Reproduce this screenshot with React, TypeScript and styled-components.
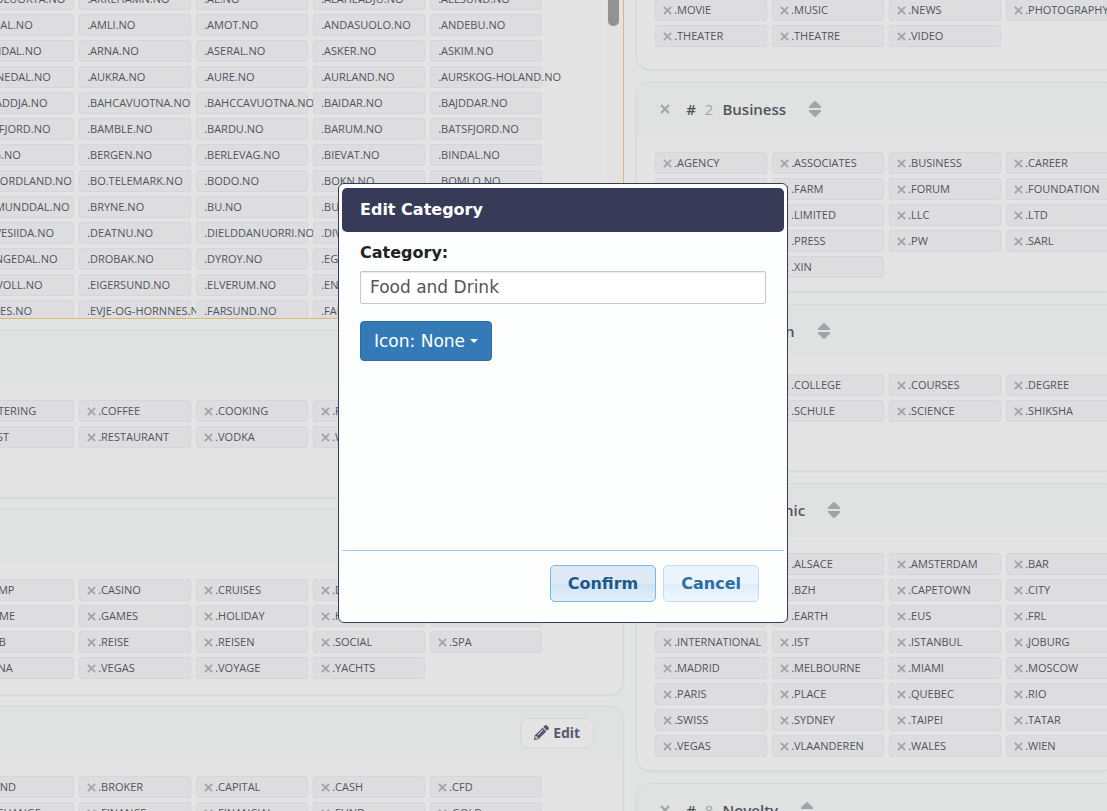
import React from "react";
import styled, { createGlobalStyle } from "styled-components";

const GlobalStyle = createGlobalStyle`
  * { box-sizing: border-box; }
  html, body { margin: 0; height: 100%; }
  #root { height: 100%; }
  body {
    background: #e2e4e3;
    color: #50555d;
    font-family: "Open Sans", "Noto Sans", sans-serif;
    font-size: 12px;
    overflow: hidden;
  }
  button, input { font: inherit; color: inherit; }
`;

const Page = styled.main`
  height: 100vh;
  overflow: hidden;
`;

const Columns = styled.div`
  display: grid;
  grid-template-columns: minmax(0, 57fr) minmax(0, 43fr);
  gap: 12px;
  margin-top: -12px;
`;

const Column = styled.div<{ $gap: number }>`
  display: flex;
  flex-direction: column;
  gap: ${(p) => p.$gap}px;
  min-width: 0;
`;

const ScrollPanel = styled.section`
  display: flex;
  height: 331px;
  overflow: hidden;
  background: #e4e4e4;
  border: solid #dcb878;
  border-width: 0 1px 1px 0;
`;

const ScrollBody = styled.div`
  flex: 1;
  min-width: 0;
  padding-right: 63px;
`;

const ScrollTrack = styled.div`
  flex: none;
  width: 18px;
  padding: 0 4px 0 3px;
  background: #e2e2e2;
`;

const ScrollThumb = styled.div`
  height: 38px;
  border-radius: 0 0 5px 5px;
  background: #929292;
`;

const ChipGrid = styled.ul<{ $align: "start" | "end" }>`
  display: grid;
  grid-template-columns: repeat(${(p) => (p.$align === "end" ? 5 : 4)}, 112px);
  justify-content: ${(p) => p.$align};
  gap: 4px 5px;
  margin: 0;
  padding: 0;
  list-style: none;
`;

const ChipItem = styled.li`
  display: flex;
  align-items: center;
  gap: 2px;
  height: 22px;
  padding: 0 7px;
  background: #dddddf;
  border: 1px solid #d6d6d8;
  border-radius: 3px;
  font-size: 11px;
  line-height: 20px;
  white-space: nowrap;
`;

const IconButton = styled.button`
  display: flex;
  flex: none;
  padding: 0;
  border: 0;
  background: none;
  color: #a0a4ac;
`;

const Card = styled.section<{ $side: "left" | "right" }>`
  min-height: ${(p) => (p.$side === "left" ? 168 : 167)}px;
  background: #e4e4e4;
  border: 1px solid #d6d8d7;
  border-radius: ${(p) => (p.$side === "left" ? "0 14px 14px 0" : "14px 0 0 14px")};
  ${(p) => (p.$side === "left" ? "border-left-width: 0;" : "border-right-width: 0;")}
  box-shadow: 0 1px 2px #d8dad9;
`;

const CardHead = styled.header<{ $side: "left" | "right" }>`
  display: flex;
  align-items: center;
  justify-content: ${(p) => (p.$side === "left" ? "flex-end" : "flex-start")};
  height: 53px;
  padding: 0 29px 2px 23px;
  background: #e0e2e1;
  border-radius: ${(p) => (p.$side === "left" ? "0 13px 0 0" : "13px 0 0 0")};
`;

const CardBody = styled.div<{ $side: "left" | "right" }>`
  padding: ${(p) => (p.$side === "left" ? "16px 81px 15px 0" : "16px 0 13px 18px")};
`;

const Title = styled.h2`
  display: flex;
  gap: 9px;
  margin: 0 23px 0 16px;
  font-size: 15px;
  font-weight: 600;
  line-height: 20px;
`;

const Order = styled.span`
  color: #a0a4ac;
  font-weight: 400;
`;

const EditButton = styled.button`
  display: flex;
  align-items: center;
  gap: 4px;
  height: 30px;
  width: 74px;
  padding: 0 13px;
  border: 1px solid #d6d8d7;
  border-radius: 9px;
  background: #e4e4e4;
  color: #565a70;
  font-family: "Noto Sans", sans-serif;
  font-size: 14px;
  font-weight: 700;
`;

const Overlay = styled.div`
  position: fixed;
  inset: 0;
  display: flex;
  align-items: center;
  justify-content: center;
  padding: 0 0 5px 19px;
`;

const Dialog = styled.form`
  display: flex;
  flex-direction: column;
  width: 450px;
  min-height: 440px;
  padding: 4px 3px;
  background: #fcfefe;
  border: 1px solid #383b58;
  border-radius: 6px;
  color: #222;
  font-family: "DejaVu Sans", sans-serif;
  font-size: 17px;
`;

const DialogTitle = styled.h1`
  margin: 0;
  padding: 0 18px;
  background: #383b58;
  border-radius: 5px;
  color: #fff;
  font-size: 16px;
  font-weight: 700;
  line-height: 44px;
`;

const DialogBody = styled.div`
  display: flex;
  flex: 1;
  flex-direction: column;
  align-items: flex-start;
  padding: 9px 18px;
`;

const FieldLabel = styled.label`
  font-size: 16px;
  font-weight: 700;
  line-height: 24px;
`;

const TextInput = styled.input`
  width: 100%;
  height: 33px;
  margin: 6px 0 17px;
  padding: 0 9px 1px;
  border: 1px solid #c6c8c8;
  border-radius: 2px;
  background: #fff;
  box-shadow: inset 0 1px 1px #ececec;
  color: #555;
`;

const IconPicker = styled.button`
  display: flex;
  align-items: center;
  gap: 5px;
  height: 40px;
  padding: 0 13px;
  border: 1px solid #2e6da4;
  border-radius: 4px;
  background: #337ab7;
  color: #fff;
`;

const Caret = styled.span`
  border: 4px solid transparent;
  border-top-color: #fff;
  border-bottom-width: 0;
`;

const DialogFoot = styled.footer`
  display: flex;
  justify-content: flex-end;
  gap: 7px;
  padding: 14px 25px 16px;
  border-top: 1px solid #a6cbe6;
`;

const DialogButton = styled.button<{ $active?: boolean }>`
  height: 37px;
  padding: 0 17px 1px;
  border: 1px solid ${(p) => (p.$active ? "#79b7e7" : "#c5dbec")};
  border-radius: 5px;
  background: ${(p) =>
    p.$active
      ? "linear-gradient(#deebf7 50%, #cfe3f4 51%, #e4f0fa)"
      : "linear-gradient(#e9f4fe 50%, #dcedfc 51%, #eff7ff)"};
  color: ${(p) => (p.$active ? "#1d5987" : "#2e6e9e")};
  font-size: 16px;
  font-weight: 700;
`;

const Cross = ({ size }: { size: number }) => (
  <svg width={size} height={size} viewBox="0 0 10 10" fill="none" stroke="currentColor" strokeWidth="2.1" aria-hidden="true">
    <path d="M1 1 9 9M9 1 1 9" />
  </svg>
);

const SortIcon = () => (
  <svg width="12" height="16" viewBox="0 0 12 16" fill="currentColor" aria-hidden="true">
    <path d="M5 .5Q6-.5 7 .5L12 5.500V7H0V5.500ZM5 15.500Q6 16.500 7 15.500L12 10.500V9H0V10.500Z" />
  </svg>
);

const Pencil = () => (
  <svg width="15" height="15" viewBox="0 0 512 512" fill="currentColor" aria-hidden="true">
    <path d="M498 142l-46.600 46.600c-4.700 4.700-12.300 4.700-17 0L323.500 77.700c-4.700-4.700-4.700-12.300 0-17l46.600-46.600c18.700-18.700 49.100-18.700 67.900 0l60.100 60.100c18.800 18.700 18.800 49.100-.1 67.800zM284.200 99.800 21.600 362.400.400 483.900c-2.900 16.400 11.400 30.600 27.800 27.800l121.500-21.300 262.600-262.600c4.700-4.700 4.700-12.300 0-17L301.400 99.800c-4.800-4.700-12.400-4.700-17.200 0zM124.100 339.900c-5.500-5.500-5.500-14.300 0-19.800l154-154c5.500-5.500 14.300-5.500 19.800 0s5.500 14.300 0 19.800l-154 154c-5.500 5.500-14.300 5.500-19.800 0zM88 424h48v36.300l-64.500 11.300-31.100-31.100L51.700 376H88v48z" />
  </svg>
);

type Side = "left" | "right";

const Chips = ({ names, align, removable = true }: { names: string; align: "start" | "end"; removable?: boolean }) => (
  <ChipGrid $align={align}>
    {names.split(" ").map((name) => (
      <ChipItem key={name}>
        {removable && (
          <IconButton type="button" aria-label={`Remove .${name}`}>
            <Cross size={9} />
          </IconButton>
        )}
        .{name}
      </ChipItem>
    ))}
  </ChipGrid>
);

const Category = ({ side, order, title, names }: { side: Side; order?: number; title?: string; names: string }) => (
  <Card $side={side}>
    <CardHead $side={side}>
      {side === "right" ? (
        <>
          <IconButton type="button" aria-label={`Remove ${title}`}>
            <Cross size={10} />
          </IconButton>
          <Title>
            <span>#</span>
            <Order>{order}</Order>
            <span>{title}</span>
          </Title>
          <IconButton type="button" aria-label={`Reorder ${title}`}>
            <SortIcon />
          </IconButton>
        </>
      ) : (
        <EditButton type="button">
          <Pencil />
          Edit
        </EditButton>
      )}
    </CardHead>
    <CardBody $side={side}>
      <Chips names={names} align={side === "left" ? "end" : "start"} />
    </CardBody>
  </Card>
);

const TopCard = styled(Card)`
  min-height: 0;
  padding: 11px 0 22px 18px;
  border-top-width: 0;
  border-top-left-radius: 0;
`;

const norway = [
  "AKNOLUOKTA AKREHAMN AL ALAHEADJU ALESUND",
  "ALVDAL AMLI AMOT ANDASUOLO ANDEBU",
  "ARENDAL ARNA ASERAL ASKER ASKIM",
  "AUDNEDAL AUKRA AURE AURLAND AURSKOG-HOLAND",
  "BADADDJA BAHCAVUOTNA BAHCCAVUOTNA BAIDAR BAJDDAR",
  "BALSFJORD BAMBLE BARDU BARUM BATSFJORD",
  "BERG BERGEN BERLEVAG BIEVAT BINDAL",
  "BO.NORDLAND BO.TELEMARK BODO BOKN BOMLO",
  "BRUMUNDDAL BRYNE BU BUDEJJU BYGLAND",
  "DAVVESIIDA DEATNU DIELDDANUORRI DIVTASVUODNA DONNA",
  "DRANGEDAL DROBAK DYROY EGERSUND EID",
  "EIDSVOLL EIGERSUND ELVERUM ENEBAKK ENGERDAL",
  "EVENES EVJE-OG-HORNNES FARSUND FAUSKE FEDJE",
]
  .join(" ")
  .split(" ")
  .map((name) => `${name}.NO`)
  .join(" ");

export default function App() {
  return (
    <>
      <GlobalStyle />
      <Page>
        <Columns>
          <Column $gap={11}>
            <ScrollPanel>
              <ScrollBody>
                <Chips names={norway} align="end" removable={false} />
              </ScrollBody>
              <ScrollTrack>
                <ScrollThumb />
              </ScrollTrack>
            </ScrollPanel>
            <Category side="left" names="CATERING COFFEE COOKING FOOD PIZZA REST RESTAURANT VODKA WINE" />
            <Category
              side="left"
              names="CAMP CASINO CRUISES DATING FLIGHTS GAME GAMES HOLIDAY HOTELES POKER PUB REISE REISEN SOCIAL SPA VANA VEGAS VOYAGE YACHTS"
            />
            <Category side="left" names="BOND BROKER CAPITAL CASH CFD EXCHANGE FINANCE FINANCIAL FUND GOLD" />
          </Column>
          <Column $gap={12}>
            <TopCard $side="right">
              <Chips align="start" names="MOVIE MUSIC NEWS PHOTOGRAPHY THEATER THEATRE VIDEO" />
            </TopCard>
            <Category
              side="right"
              order={2}
              title="Business"
              names="AGENCY ASSOCIATES BUSINESS CAREER COMPANY FARM FORUM FOUNDATION GMBH LIMITED LLC LTD MEDIA PRESS PW SARL WORK XIN"
            />
            <Category
              side="right"
              order={3}
              title="Education"
              names="ACADEMY COLLEGE COURSES DEGREE MBA SCHULE SCIENCE SHIKSHA"
            />
            <Category
              side="right"
              order={5}
              title="Geographic"
              names="AFRICA ALSACE AMSTERDAM BAR BERLIN BZH CAPETOWN CITY DURBAN EARTH EUS FRL INTERNATIONAL IST ISTANBUL JOBURG MADRID MELBOURNE MIAMI MOSCOW PARIS PLACE QUEBEC RIO SWISS SYDNEY TAIPEI TATAR VEGAS VLAANDEREN WALES WIEN"
            />
            <Category side="right" order={8} title="Novelty" names="NINJA" />
          </Column>
        </Columns>
      </Page>
      <Overlay>
        <Dialog role="dialog" aria-labelledby="dialog-title" onSubmit={(e) => e.preventDefault()}>
          <DialogTitle id="dialog-title">Edit Category</DialogTitle>
          <DialogBody>
            <FieldLabel htmlFor="category">Category:</FieldLabel>
            <TextInput id="category" defaultValue="Food and Drink" />
            <IconPicker type="button" aria-haspopup="listbox">
              Icon: None
              <Caret />
            </IconPicker>
          </DialogBody>
          <DialogFoot>
            <DialogButton $active type="submit">
              Confirm
            </DialogButton>
            <DialogButton type="button">Cancel</DialogButton>
          </DialogFoot>
        </Dialog>
      </Overlay>
    </>
  );
}
